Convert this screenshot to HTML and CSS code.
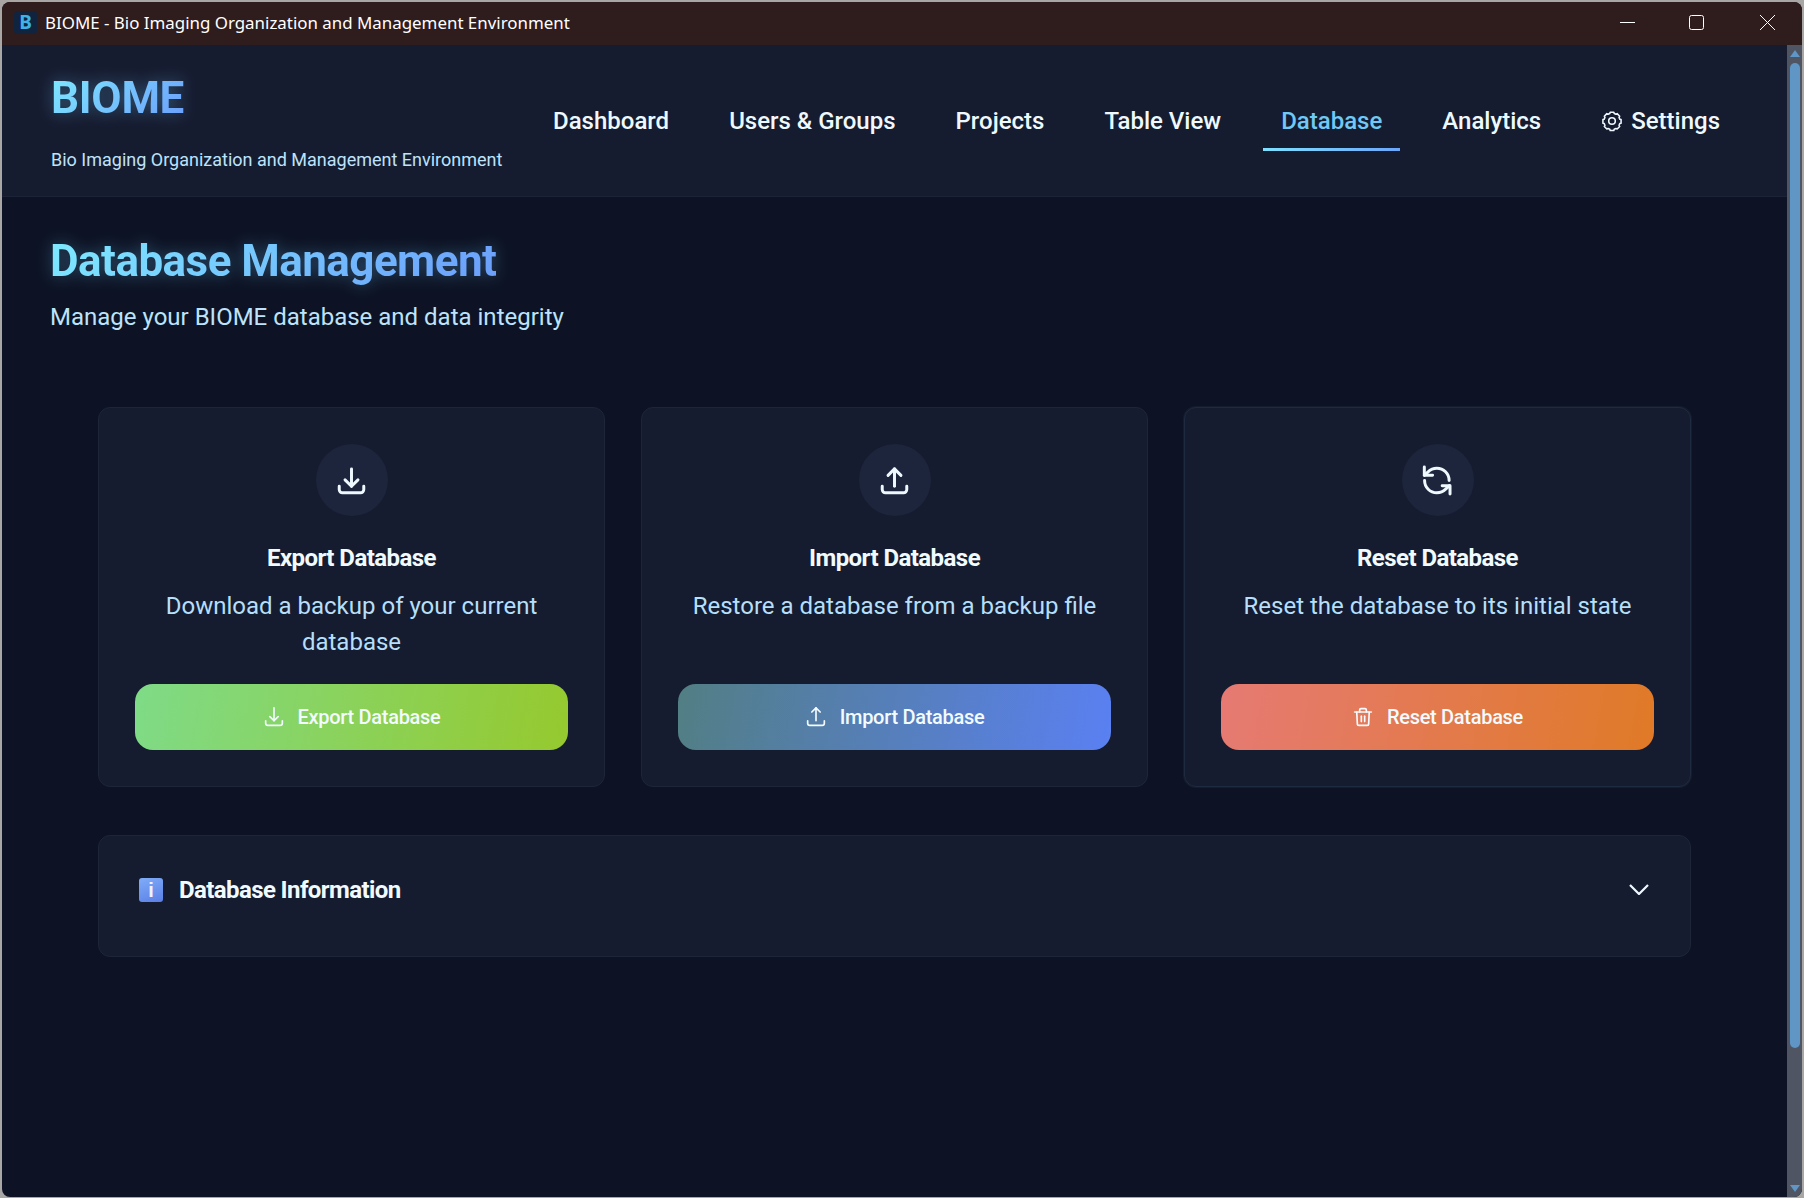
FILE: index.html
```html
<!DOCTYPE html>
<html>
<head>
  <meta charset="UTF-8">
  <title>BIOME - Bio Imaging Organization and Management Environment</title>
  <link rel="stylesheet" href="styles.css">
</head>
<body>
  <div class="window">
    <div class="titlebar">
      <span class="app-icon">B</span>
      <span class="window-title">BIOME - Bio Imaging Organization and Management Environment</span>
      <div class="window-controls">
        <svg class="control-icon" viewBox="0 0 15 15"><path d="M0 7.500h15"/></svg>
        <svg class="control-icon" viewBox="0 0 15 15"><rect x="0.5" y="0.5" width="14" height="14" rx="2"/></svg>
        <svg class="control-icon control-close" viewBox="0 0 15 15"><path d="M0 0l15 15M15 0L0 15"/></svg>
      </div>
    </div>

    <div class="app-body">
      <div class="app">
        <header class="header">
          <div class="logo">
            <h1 class="logo-title"><span class="gradient-text">BIOME</span></h1>
            <p class="logo-subtitle">Bio Imaging Organization and Management Environment</p>
          </div>
          <nav class="nav">
            <a class="nav-link">Dashboard</a>
            <a class="nav-link">Users &amp; Groups</a>
            <a class="nav-link">Projects</a>
            <a class="nav-link">Table View</a>
            <a class="nav-link active">Database</a>
            <a class="nav-link">Analytics</a>
            <a class="nav-link">
              <svg class="gear-icon" viewBox="0 0 24 24" fill="none" stroke="currentColor" stroke-width="1.7" stroke-linejoin="round">
                <path d="M9.6 3.900l.4-1.400h4l.4 1.400 1.900.8 1.300-.7 2.800 2.800-.7 1.300.8 1.900 1.400.4v4l-1.400.4-.8 1.900.7 1.300-2.800 2.800-1.300-.7-1.900.8-.4 1.400h-4l-.4-1.400-1.900-.8-1.300.7-2.800-2.800.7-1.300-.8-1.900-1.400-.4v-4l1.400-.4.8-1.900-.7-1.300 2.800-2.800 1.300.7z"/>
                <circle cx="12" cy="12" r="3.600"/>
              </svg>
              Settings
            </a>
          </nav>
        </header>

        <main class="main">
          <h2 class="page-title"><span class="gradient-text">Database Management</span></h2>
          <p class="page-subtitle">Manage your BIOME database and data integrity</p>

          <div class="content">
            <div class="cards">
              <div class="card">
                <div class="card-icon">
                  <svg viewBox="0 0 24 24" fill="none" stroke="currentColor" stroke-width="2.3" stroke-linecap="round" stroke-linejoin="round"><path d="M2.500 16.500v2.500a2.500 2.500 0 0 0 2.500 2.500h14a2.500 2.500 0 0 0 2.500-2.500v-2.500"/><path d="M17 11.500l-5 5-5-5"/><path d="M12 16.500V3"/></svg>
                </div>
                <h3 class="card-title">Export Database</h3>
                <p class="card-text">Download a backup of your current database</p>
                <button class="btn btn-export">
                  <svg viewBox="0 0 24 24" fill="none" stroke="currentColor" stroke-width="2" stroke-linecap="round" stroke-linejoin="round"><path d="M2 16.500v3a2.500 2.500 0 0 0 2.500 2.500h15a2.500 2.500 0 0 0 2.500-2.500v-3"/><path d="M17 11.500l-5 5-5-5"/><path d="M12 16.500V1"/></svg>
                  Export Database
                </button>
              </div>

              <div class="card">
                <div class="card-icon">
                  <svg viewBox="0 0 24 24" fill="none" stroke="currentColor" stroke-width="2.3" stroke-linecap="round" stroke-linejoin="round"><path d="M2.500 16.500v2.500a2.500 2.500 0 0 0 2.500 2.500h14a2.500 2.500 0 0 0 2.500-2.500v-2.500"/><path d="M7 8l5-5 5 5"/><path d="M12 3v13.500"/></svg>
                </div>
                <h3 class="card-title">Import Database</h3>
                <p class="card-text">Restore a database from a backup file</p>
                <button class="btn btn-import">
                  <svg viewBox="0 0 24 24" fill="none" stroke="currentColor" stroke-width="2" stroke-linecap="round" stroke-linejoin="round"><path d="M2 16.500v3a2.500 2.500 0 0 0 2.500 2.500h15a2.500 2.500 0 0 0 2.500-2.500v-3"/><path d="M7 6l5-5 5 5"/><path d="M12 1v15.500"/></svg>
                  Import Database
                </button>
              </div>

              <div class="card card-hover">
                <div class="card-icon">
                  <svg viewBox="0 0 24 24" fill="none" stroke="currentColor" stroke-width="2.300" stroke-linecap="round" stroke-linejoin="round"><path d="M21 12a9.500 9.500 0 0 0-9.500-9.500 9.800 9.800 0 0 0-6.800 2.800L1.800 8"/><path d="M1.800 1.500V8h6.400"/><path d="M2 12a9.500 9.500 0 0 0 9.500 9.500 9.800 9.800 0 0 0 6.800-2.800l3-2.700"/><path d="M15.600 16h6.100v6.400"/></svg>
                </div>
                <h3 class="card-title">Reset Database</h3>
                <p class="card-text">Reset the database to its initial state</p>
                <button class="btn btn-reset">
                  <svg viewBox="0 0 24 24" fill="none" stroke="currentColor" stroke-width="2" stroke-linecap="round" stroke-linejoin="round"><path d="M2 6h20"/><path d="M19.500 6l-.7 14a2 2 0 0 1-2 2H7.200a2 2 0 0 1-2-2L4.500 6"/><path d="M8 6V3.500A1.500 1.500 0 0 1 9.500 2h5A1.500 1.500 0 0 1 16 3.500V6"/><path d="M10 11v6.500"/><path d="M14 11v6.500"/></svg>
                  Reset Database
                </button>
              </div>
            </div>

            <div class="info-panel">
              <div class="info-heading">
                <span class="info-icon"><span class="info-glyph">i</span></span>
                <span class="info-title">Database Information</span>
              </div>
              <svg class="chevron" viewBox="0 0 20 11" fill="none" stroke="currentColor" stroke-width="2.200"><path d="M1 1l9 9 9-9"/></svg>
            </div>
          </div>
        </main>
      </div>

      <div class="scrollbar">
        <span class="scroll-arrow scroll-up"></span>
        <span class="scroll-thumb"></span>
        <span class="scroll-arrow scroll-down"></span>
      </div>
    </div>
  </div>
</body>
</html>
```

FILE: styles.css
```css
* {
  box-sizing: border-box;
}

html, body {
  height: 100%;
}

body {
  margin: 0;
  background-color: #a9a7a5;
  font-family: Roboto, "Open Sans", sans-serif;
  overflow: hidden;
}

.window {
  height: 1195px;
  margin: 2px 2px 1px 2px;
  border-radius: 8px;
  overflow: hidden;
  display: flex;
  flex-direction: column;
  background-color: #0d1324;
}

/* title bar */
.titlebar {
  height: 43px;
  flex-shrink: 0;
  display: flex;
  align-items: center;
  padding: 0 0 2px 12px;
  background-color: #2f1c1d;
  color: #ffffff;
}

.app-icon {
  width: 23px;
  height: 23px;
  border-radius: 4px;
  background-color: #10243f;
  color: #3fb2e6;
  font-family: "Noto Sans", sans-serif;
  font-size: 19px;
  font-weight: 700;
  line-height: 23px;
  text-align: center;
}

.window-title {
  margin-left: 8px;
  font-family: "Noto Sans", sans-serif;
  font-size: 16.900px;
  white-space: nowrap;
}

.window-controls {
  margin-left: auto;
  display: flex;
  gap: 54px;
  padding-right: 27px;
}

.control-icon {
  width: 15px;
  height: 15px;
  fill: none;
  stroke: #ffffff;
  stroke-width: 1;
}

.control-close {
  margin-left: 2px;
}

.app-body {
  flex: 1;
  display: flex;
  min-height: 0;
}

.app {
  flex: 1;
  min-width: 0;
}

/* header */
.header {
  display: flex;
  justify-content: space-between;
  align-items: center;
  padding: 27px 49px 24px 49px;
  background-color: #161c30;
  border-bottom: 1px solid #1c2338;
}

.logo-title {
  margin: 0;
  font-size: 44px;
  font-weight: 700;
  line-height: 52px;
  letter-spacing: -0.3px;
}

.logo-subtitle {
  margin: 24px 0 0;
  font-size: 18px;
  line-height: 24px;
  color: #bde3fb;
}

.gradient-text {
  background: linear-gradient(135deg, #7eeaff, #6b9dfb);
  -webkit-background-clip: text;
  background-clip: text;
  color: transparent;
  filter: drop-shadow(0 0 8px rgba(110, 200, 255, 0.35));
}

.nav {
  display: flex;
  gap: 24px;
  margin-top: -3px;
}

.nav-link {
  position: relative;
  display: flex;
  align-items: center;
  gap: 8px;
  padding: 15px 18px;
  font-size: 24px;
  font-weight: 500;
  line-height: 30px;
  color: #eef9ff;
}

.nav-link.active {
  color: #6fc8f5;
}

.nav-link.active::after {
  content: "";
  position: absolute;
  left: 0;
  right: 0;
  bottom: 0;
  height: 3px;
  background: linear-gradient(90deg, #7ee0ff, #6ba6fb);
}

.gear-icon {
  width: 22px;
  height: 22px;
}

/* page content */
.main {
  padding: 38px 48px 0;
}

.page-title {
  margin: 0;
  font-size: 44px;
  font-weight: 700;
  line-height: 52px;
  letter-spacing: -0.55px;
}

.page-subtitle {
  margin: 13px 0 0;
  font-size: 24px;
  line-height: 34px;
  color: #bde3fb;
}

.content {
  margin: 73px 48px 0;
}

.cards {
  display: grid;
  grid-template-columns: repeat(3, 1fr);
  gap: 36px;
}

.card {
  display: flex;
  flex-direction: column;
  align-items: center;
  height: 380px;
  padding: 36px;
  border: 1px solid #1e2539;
  border-radius: 12px;
  background-color: #161c30;
  text-align: center;
}

.card-hover {
  border-color: #1e2a40;
  box-shadow: 0 0 0 1px #141d2e;
}

.card-icon {
  width: 72px;
  height: 72px;
  flex-shrink: 0;
  display: flex;
  align-items: center;
  justify-content: center;
  border-radius: 50%;
  background-color: #1d253c;
  color: #eef9ff;
}

.card-icon svg {
  width: 31px;
  height: 31px;
}

.card-title {
  margin: 27px 0 0;
  font-size: 24px;
  font-weight: 700;
  line-height: 30px;
  letter-spacing: -0.55px;
  color: #f0faff;
}

.card-text {
  margin: 15px 0 0;
  font-size: 24px;
  line-height: 36px;
  color: #b5dffa;
}

.btn {
  width: 100%;
  height: 66px;
  margin-top: auto;
  padding: 0 0 0 1px;
  flex-shrink: 0;
  display: flex;
  align-items: center;
  justify-content: center;
  gap: 14px;
  border: none;
  border-radius: 18px;
  font-family: Roboto, sans-serif;
  font-size: 20px;
  font-weight: 500;
  letter-spacing: -0.3px;
  color: #f2fbff;
}

.btn svg {
  width: 20px;
  height: 20px;
}

.btn-export {
  background: linear-gradient(100deg, #7fdb87, #96c92e);
}

.btn-import {
  background: linear-gradient(100deg, #527e84, #5a80f2);
}

.btn-reset {
  background: linear-gradient(100deg, #e67a74, #e07a27);
}

/* info panel */
.info-panel {
  height: 122px;
  margin-top: 48px;
  padding: 41px 41px 0 40px;
  display: flex;
  justify-content: space-between;
  align-items: flex-start;
  border: 1px solid #1e2539;
  border-radius: 12px;
  background-color: #161c30;
}

.info-heading {
  display: flex;
  align-items: center;
  gap: 16px;
}

.info-icon {
  width: 24px;
  height: 24px;
  display: flex;
  align-items: center;
  justify-content: center;
  border-radius: 3px;
  background: linear-gradient(160deg, #80adf8, #5a7fe6);
}

.info-glyph {
  font-family: "Liberation Sans", sans-serif;
  font-size: 20px;
  font-weight: 700;
  color: #eef3ff;
}

.info-title {
  font-size: 24px;
  font-weight: 700;
  line-height: 26px;
  letter-spacing: -0.6px;
  color: #f0faff;
}

.chevron {
  width: 20px;
  height: 11px;
  margin-top: 7px;
  color: #eef9ff;
}

/* scrollbar */
.scrollbar {
  width: 15px;
  flex-shrink: 0;
  display: flex;
  flex-direction: column;
  align-items: center;
  padding: 5px 0 5px;
  background-color: #4f5563;
}

.scroll-thumb {
  width: 10px;
  height: 985px;
  margin-top: 6px;
  border-radius: 5px;
  background-color: #5f96c5;
}

.scroll-arrow {
  width: 0;
  height: 0;
  border-left: 5px solid transparent;
  border-right: 5px solid transparent;
}

.scroll-up {
  border-bottom: 7px solid #5f96c5;
}

.scroll-down {
  margin-top: auto;
  border-top: 7px solid #5f96c5;
}
```
